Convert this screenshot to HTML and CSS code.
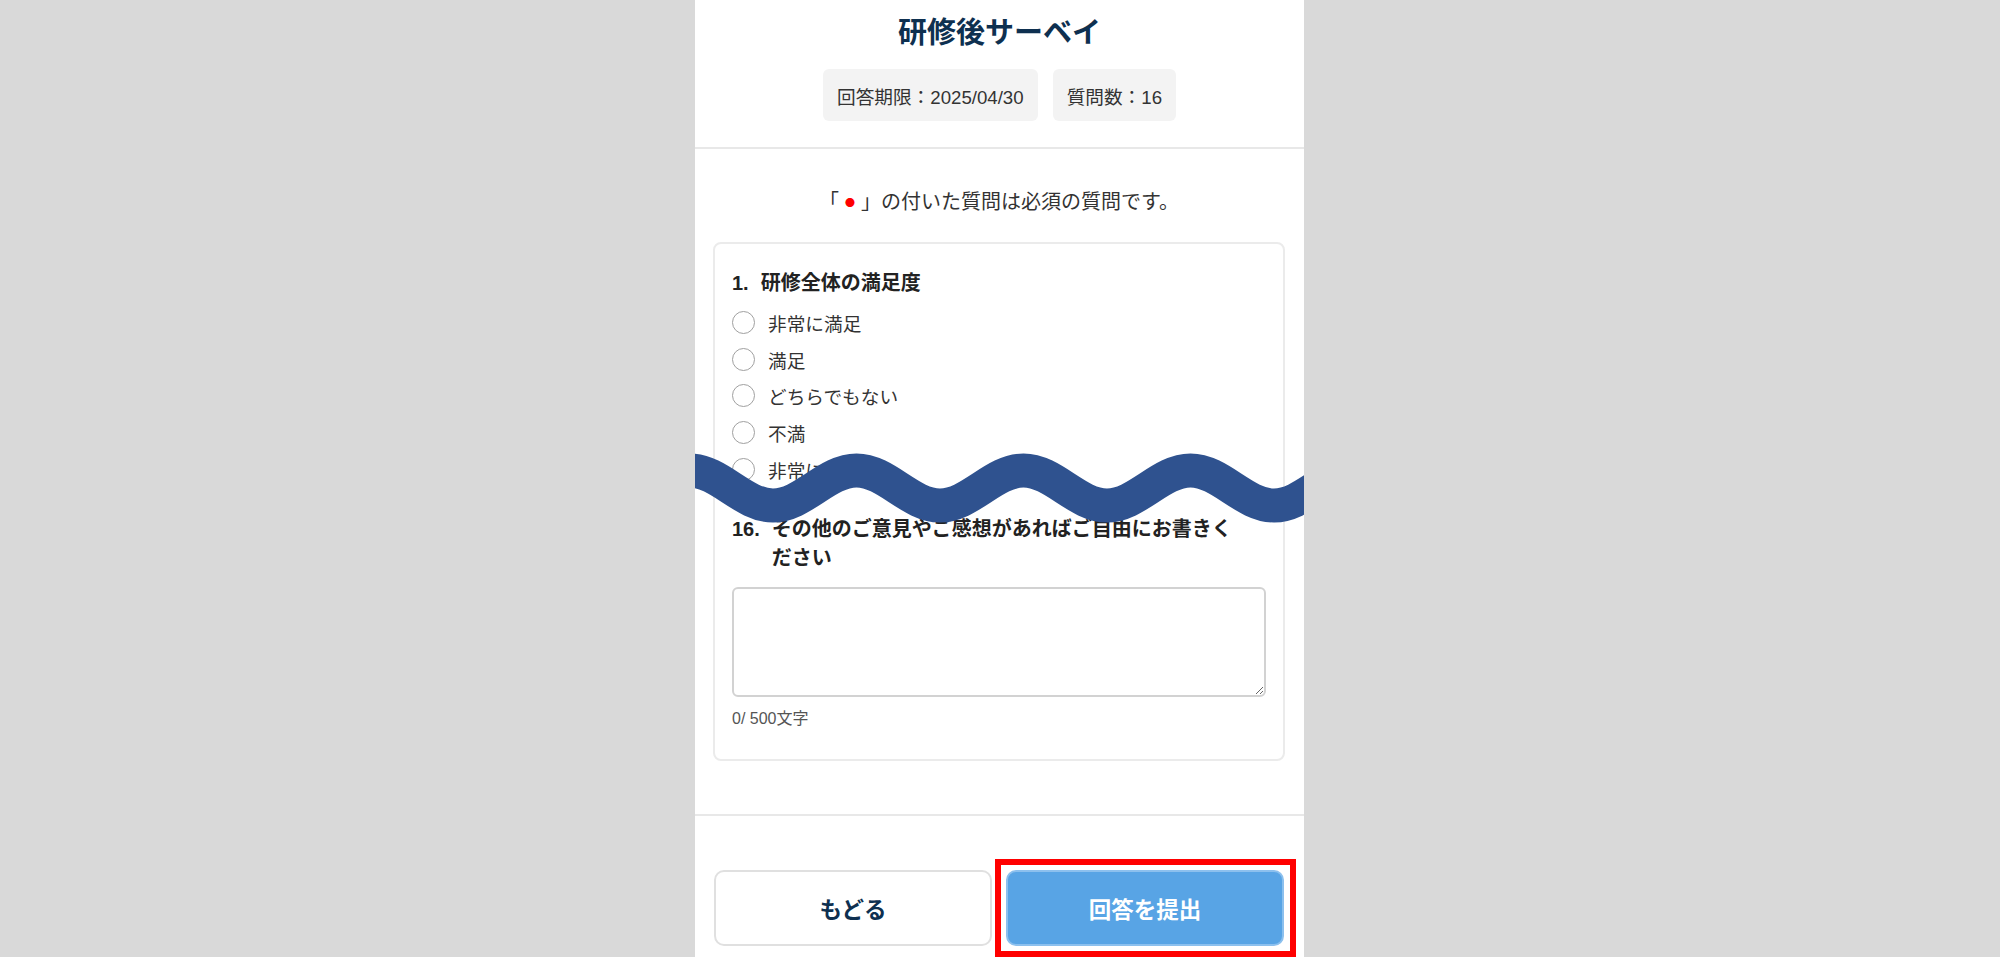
FILE: index.html
```html
<!DOCTYPE html>
<html lang="ja">
<head>
<meta charset="utf-8">
<title>研修後サーベイ</title>
<link rel="stylesheet" href="styles.css">
</head>
<body>
<div class="page">
  <header class="head">
    <h1 class="title">研修後サーベイ</h1>
    <div class="badges">
      <span class="badge">回答期限：2025/04/30</span>
      <span class="badge">質問数：16</span>
    </div>
  </header>
  <main class="main">
    <p class="notice">「<span class="req">●</span>」の付いた質問は必須の質問です。</p>
    <section class="card">
      <div class="q">
        <h2 class="q-title"><span class="q-num">1.</span><span class="q-text">研修全体の満足度</span></h2>
        <ul class="options">
          <li class="option"><span class="radio"></span><span>非常に満足</span></li>
          <li class="option"><span class="radio"></span><span>満足</span></li>
          <li class="option"><span class="radio"></span><span>どちらでもない</span></li>
          <li class="option"><span class="radio"></span><span>不満</span></li>
          <li class="option"><span class="radio"></span><span>非常に不満</span></li>
        </ul>
      </div>
      <div class="q q16">
        <h2 class="q-title"><span class="q-num">16.</span><span class="q-text">その他のご意見やご感想があればご自由にお書きください</span></h2>
        <textarea class="answer"></textarea>
        <p class="count">0/ 500文字</p>
      </div>
    </section>
  </main>
  <footer class="foot">
    <button class="btn btn-back">もどる</button>
    <div class="submit-wrap">
      <button class="btn btn-submit">回答を提出</button>
      <span class="highlight"></span>
    </div>
  </footer>
  <svg class="wave" viewBox="0 0 609 76" width="609" height="76">
    <path d="M -5.5 20.5 C 24.5 20.5 48 55.5 78 55.5 S 131.5 20.5 161.5 20.5 S 215 55.5 245 55.5 S 298.5 20.5 328.5 20.5 S 382 55.5 412 55.5 S 465.5 20.5 495.5 20.5 S 549 55.5 579 55.5 S 632.5 20.5 662.5 20.5" fill="none" stroke="#2f528f" stroke-width="34"/>
  </svg>
</div>
</body>
</html>
```

FILE: styles.css
```css
html, body {
  margin: 0;
  height: 100%;
  overflow: hidden;
  background: #d9d9d9;
  font-family: "Liberation Sans", "Noto Sans CJK JP", sans-serif;
}

.page {
  position: relative;
  width: 609px;
  min-height: 100vh;
  margin-left: calc(50% - 305px);
  background: #fff;
}

.head {
  display: flex;
  flex-direction: column;
  align-items: center;
  gap: 16px;
  padding: 13px 0 26px;
  border-bottom: 2px solid #e8e8e8;
}

.title {
  margin: 0;
  font-size: 29px;
  line-height: 40px;
  font-weight: 700;
  color: #0e3050;
}

.badges {
  display: flex;
  gap: 15px;
}

.badge {
  display: flex;
  align-items: center;
  height: 52px;
  padding: 0 14px;
  border-radius: 6px;
  background: #f3f3f3;
  font-size: 18.67px;
  color: #333;
}

.main {
  padding: 40px 19px 53px 18px;
  border-bottom: 2px solid #e8e8e8;
}

.notice {
  margin: 0 0 26px;
  text-align: center;
  font-size: 20px;
  line-height: 26px;
  color: #333;
}

.req {
  font-family: "Noto Sans CJK JP", sans-serif;
  color: #f00;
  font-size: 10px;
  margin: 0 6px;
  vertical-align: 2px;
}

.card {
  border: 2px solid #ebebeb;
  border-radius: 8px;
  padding: 25px 17px 29px;
}

.q-title {
  display: flex;
  margin: 0;
  padding-right: 24px;
  font-size: 20px;
  line-height: 29px;
  font-weight: 700;
  color: #222;
}

.q-num {
  flex: none;
  margin-right: 12px;
}

.options {
  list-style: none;
  margin: 6px 0 0;
  padding: 0;
}

.option {
  display: flex;
  align-items: center;
  gap: 13px;
  height: 36.7px;
  font-size: 18.67px;
  color: #333;
}

.radio {
  flex: none;
  width: 23px;
  height: 23px;
  box-sizing: border-box;
  border: 1.5px solid #a0a0a0;
  border-radius: 50%;
  background: #fff;
}

.q16 {
  margin-top: 28px;
}

.answer {
  display: block;
  width: 100%;
  height: 110px;
  box-sizing: border-box;
  margin-top: 14px;
  border: 2px solid #d2d2d2;
  border-radius: 6px;
  background: #fff;
}

.count {
  margin: 11px 0 0;
  font-size: 16px;
  line-height: 22px;
  color: #555;
}

.foot {
  display: grid;
  grid-template-columns: 1fr 1fr;
  gap: 14px;
  padding: 54px 20px 10px 19px;
}

.btn {
  box-sizing: border-box;
  width: 100%;
  height: 76px;
  padding: 0;
  border-radius: 10px;
  font-family: inherit;
  font-size: 22.5px;
  font-weight: 700;
  cursor: pointer;
}

.btn-back {
  background: #fff;
  border: 2px solid #e0e0e0;
  color: #0e3050;
}

.submit-wrap {
  position: relative;
  display: flex;
}

.btn-submit {
  background: #58a4e5;
  border: 2px solid #8cc0ee;
  color: #fff;
}

.highlight {
  position: absolute;
  top: -11px;
  right: -12px;
  bottom: -11px;
  left: -11px;
  border: 6px solid #f00;
  pointer-events: none;
}

.wave {
  position: absolute;
  left: 0;
  top: 450px;
  display: block;
}
```
